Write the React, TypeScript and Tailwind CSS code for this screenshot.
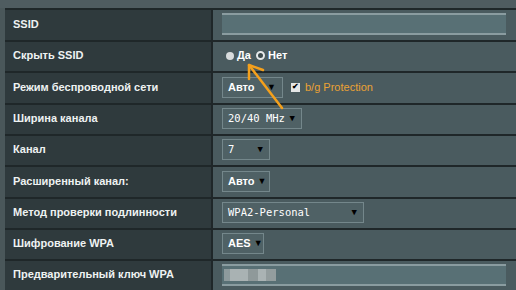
import React from 'react';

const Tri = () => <span className="text-black text-[9px] leading-none">▼</span>;

interface SelProps { text: string; w: string; mono?: boolean }

const Select: React.FC<SelProps> = ({ text, w, mono }) => (
  <div className={`${w} h-[21px] flex items-center justify-between gap-[3px] pl-[5px] pr-[6px] whitespace-nowrap bg-[#4f6165] border border-[#74878b] text-white ${mono ? "font-['DejaVu_Sans_Mono',monospace] text-[10.5px]" : "text-[11px] font-bold"}`}>
    <span>{text}</span>
    <Tri />
  </div>
);

const TextBox = ({ children }: { children?: React.ReactNode }) => (
  <div className="w-[284px] h-[22px] bg-[#587075] border-t-2 border-b-2 border-t-[#8a9ca0] border-b-[#8a9ca0] flex items-center">
    {children}
  </div>
);

const rows: { label: string; h: string; value: React.ReactNode }[] = [
  { label: 'SSID', h: 'h-[32px]', value: <TextBox /> },
  {
    label: 'Скрыть SSID', h: 'h-[31px]',
    value: (
      <div className="flex items-center text-white text-[11px] font-bold pl-[4px]">
        <span className="w-[8px] h-[8px] rounded-full bg-[#d8dcdd] mr-[3px]" />
        <span>Да</span>
        <span className="w-[9px] h-[9px] rounded-full border-2 border-[#e6e9ea] bg-[#3c4a4d] ml-[5px] mr-[3px]" />
        <span>Нет</span>
      </div>
    ),
  },
  {
    label: 'Режим беспроводной сети', h: 'h-[32px]',
    value: (
      <div className="flex items-center">
        <Select text="Авто" w="w-[61px]" />
        <span className="ml-[8px] w-[9px] h-[9px] bg-[#e4e6e6] flex items-center justify-center text-[8px] leading-none text-black font-bold">✔</span>
        <span className="ml-[5px] text-[11px] text-[#eaa234]">b/g Protection</span>
      </div>
    ),
  },
  { label: 'Ширина канала', h: 'h-[31px]', value: <Select text="20/40 MHz" w="w-[80px]" mono /> },
  { label: 'Канал', h: 'h-[31px]', value: <Select text="7" w="w-[48px]" mono /> },
  { label: 'Расширенный канал:', h: 'h-[32px]', value: <Select text="Авто" w="w-[48px]" /> },
  { label: 'Метод проверки подлинности', h: 'h-[31px]', value: <Select text="WPA2-Personal" w="w-[142px]" mono /> },
  { label: 'Шифрование WPA', h: 'h-[31px]', value: <Select text="AES" w="w-[42px]" /> },
  {
    label: 'Предварительный ключ WPA', h: 'h-[31px]',
    value: (
      <TextBox>
        <div className="ml-[2px] flex h-[12px]">
          <span className="w-[6px] bg-[#8d9a9c]" />
          <span className="w-[18px] bg-[#a9b2b3]" />
          <span className="w-[10px] bg-[#8f999a]" />
          <span className="w-[8px] bg-[#aab3b4]" />
          <span className="w-[10px] bg-[#939d9e]" />
        </div>
      </TextBox>
    ),
  },
];

export default function App() {
  return (
    <div className="relative w-[516px] h-[290px] overflow-hidden bg-[#4d5a5e] font-['Liberation_Sans',Arial,sans-serif]">
      <div className="h-[8px] bg-[#4f5c60]" />
      <div className="flex">
        <div className="w-[5px] bg-[#4a575a]" />
        <div className="flex-1 flex flex-col">
          {rows.map((r, i) => (
            <div key={i} className={`flex ${r.h} border-t-2 border-[#1f2729]`}>
              <div className="w-[208px] bg-[#2f3a3d] border-r-2 border-[#1f2729] flex items-center pl-[8px] pb-[2px] text-[11px] font-bold text-[#eef2f2]">
                {r.label}
              </div>
              <div className="flex-1 bg-[#4a5b5f] flex items-center pl-[9px] pb-[2px]">{r.value}</div>
            </div>
          ))}
        </div>
      </div>
      <svg className="absolute left-0 top-0 pointer-events-none" width="516" height="290">
        <g stroke="#f4a01c" strokeWidth="2.5" fill="none" strokeLinecap="round" strokeLinejoin="round">
          <line x1="249" y1="65" x2="282" y2="108" />
          <polyline points="249,79 249,65 263,70" />
        </g>
      </svg>
    </div>
  );
}
